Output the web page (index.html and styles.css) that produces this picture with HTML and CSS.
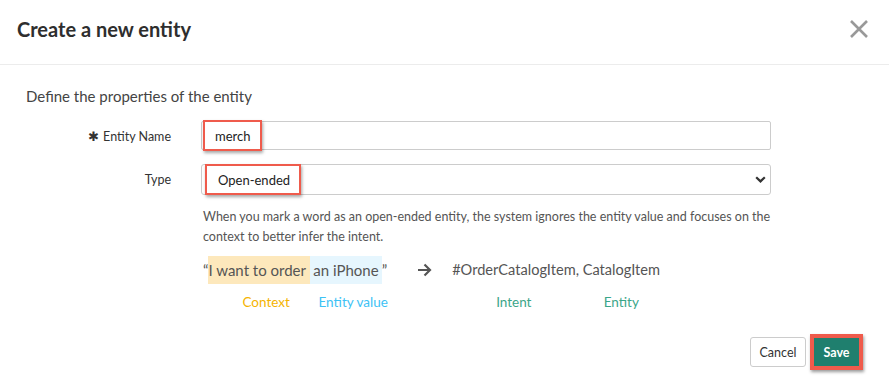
FILE: index.html
```html
<!DOCTYPE html>
<html lang="en">
<head>
  <meta charset="UTF-8">
  <title>Create a new entity</title>
  <link rel="stylesheet" href="styles.css">
</head>
<body>
  <div class="modal">
    <header class="modal-header">
      <h2>Create a new entity</h2>
      <button class="close" type="button" aria-label="Close">
        <svg width="20" height="20" viewBox="0 0 20 20"><path d="M2 2L18 18M18 2L2 18" stroke="#999" stroke-width="2.6" fill="none"/></svg>
      </button>
    </header>

    <div class="modal-body">
      <p class="section-title">Define the properties of the entity</p>

      <div class="form-row">
        <label class="label"><span class="req">&#x2731;</span>Entity Name</label>
        <div class="field">
          <span class="mark mark-name">merch</span>
        </div>
      </div>

      <div class="form-row type-row">
        <label class="label">Type</label>
        <div class="field select">
          <span class="mark mark-type">Open-ended</span>
          <svg class="chevron" width="11" height="7" viewBox="0 0 11 7"><path d="M1.2 1.2L5.5 5.4L9.8 1.2" stroke="#333" stroke-width="2.2" fill="none"/></svg>
        </div>
      </div>

      <p class="help">When you mark a word as an open-ended entity, the system ignores the entity value and focuses on the context to better infer the intent.</p>

      <div class="example">
        <div class="phrase">
          <span class="q">&ldquo;</span>
          <div class="part">
            <span class="ctx">I want to order&nbsp;</span>
            <span class="tag tag-ctx">Context</span>
          </div>
          <div class="part">
            <span class="val">&nbsp;an iPhone</span>
            <span class="tag tag-val">Entity value</span>
          </div>
          <span class="q">&rdquo;</span>
        </div>
        <svg class="arrow" width="15" height="14" viewBox="0 0 15 14"><path d="M1 7H13M7.5 1.5L13 7L7.5 12.5" stroke="#555" stroke-width="2.2" fill="none"/></svg>
        <div class="result">
          <div class="part">
            <span class="res">#OrderCatalogItem,&nbsp;</span>
            <span class="tag tag-intent">Intent</span>
          </div>
          <div class="part">
            <span class="res">CatalogItem</span>
            <span class="tag tag-entity">Entity</span>
          </div>
        </div>
      </div>
    </div>

    <footer class="modal-footer">
      <button class="btn btn-cancel" type="button">Cancel</button>
      <button class="btn btn-save" type="button">Save</button>
    </footer>
  </div>
</body>
</html>
```

FILE: styles.css
```css
body {
  margin: 0;
  font-family: Lato, 'Open Sans', sans-serif;
  background: #fff;
  color: #333;
}

.modal {
  width: 889px;
  height: 382px;
  display: flex;
  flex-direction: column;
}

.modal-header {
  height: 65px;
  box-sizing: border-box;
  display: flex;
  align-items: center;
  justify-content: space-between;
  padding: 0 20px 6px 17px;
  border-bottom: 1px solid #ececec;
}

.modal-header h2 {
  margin: 0;
  font-size: 20px;
  font-weight: 700;
  color: #2e2e2e;
}

.close {
  background: none;
  border: none;
  padding: 0;
  display: flex;
  cursor: pointer;
}

.modal-body {
  flex: 1;
  padding: 22px 0 0 26px;
}

.section-title {
  margin: 0 0 16px;
  font-size: 15px;
  color: #444;
}

.form-row {
  display: flex;
  align-items: center;
  gap: 30px;
}

.type-row {
  margin-top: 14px;
}

.label {
  width: 145px;
  text-align: right;
  font-size: 12.5px;
  color: #333;
}

.req {
  font-size: 13px;
  margin-right: 4px;
  color: #333;
}

.field {
  width: 570px;
  height: 29px;
  box-sizing: border-box;
  border: 1px solid #ccc;
  border-radius: 2px;
  display: flex;
  align-items: center;
}

.select {
  height: 31px;
  border-radius: 3px;
  justify-content: space-between;
  padding-right: 4px;
}

.mark {
  font-size: 13px;
  color: #222;
  border: 2.5px solid #ef5b4c;
  box-shadow: 1px 2px 3px rgba(0, 0, 0, 0.35);
  background: #fff;
  display: flex;
  align-items: center;
  box-sizing: border-box;
}

.mark-name {
  height: 31px;
  width: 59px;
  margin-left: 1px;
  padding-left: 10px;
}

.mark-type {
  height: 31px;
  width: 96px;
  margin-left: 3px;
  padding-left: 11px;
}

.help {
  margin: 12px 0 0 177px;
  width: 580px;
  font-size: 12.5px;
  line-height: 20px;
  color: #555;
}

.example {
  display: flex;
  align-items: flex-start;
  margin: 9px 0 0 177px;
}

.phrase,
.result {
  display: flex;
  align-items: flex-start;
}

.part {
  display: flex;
  flex-direction: column;
}

.q,
.ctx,
.val,
.res {
  font-size: 15px;
  line-height: 28px;
  color: #555;
  white-space: nowrap;
}

.res {
  font-size: 14.6px;
}

.ctx {
  background: #fde8bc;
}

.val {
  background: #e6f6fe;
  padding-right: 3px;
}

.tag {
  width: 0;
  font-size: 13.5px;
  margin-top: 10px;
  white-space: nowrap;
}

.tag-ctx {
  color: #f5b400;
  margin-left: 34px;
}

.tag-val {
  color: #3dc2f5;
  margin-left: 9px;
}

.tag-intent {
  color: #3ba689;
  margin-left: 44px;
}

.tag-entity {
  color: #3ba689;
  margin-left: 21px;
}

.arrow {
  margin: 7px 20px 0 30px;
}

.modal-footer {
  display: flex;
  justify-content: flex-end;
  align-items: center;
  gap: 4px;
  padding: 0 26px 12px 0;
}

.btn {
  font-family: inherit;
  font-size: 12.5px;
  border-radius: 3px;
  cursor: pointer;
}

.btn-cancel {
  height: 30px;
  width: 56px;
  background: #fff;
  border: 1px solid #ccc;
  color: #333;
}

.btn-save {
  height: 36px;
  width: 53px;
  background: #1f7f6e;
  color: #fff;
  font-weight: 700;
  border: 4px solid #ef5b4c;
  border-radius: 0;
  box-shadow: 1px 2px 3px rgba(0, 0, 0, 0.4);
}
```
